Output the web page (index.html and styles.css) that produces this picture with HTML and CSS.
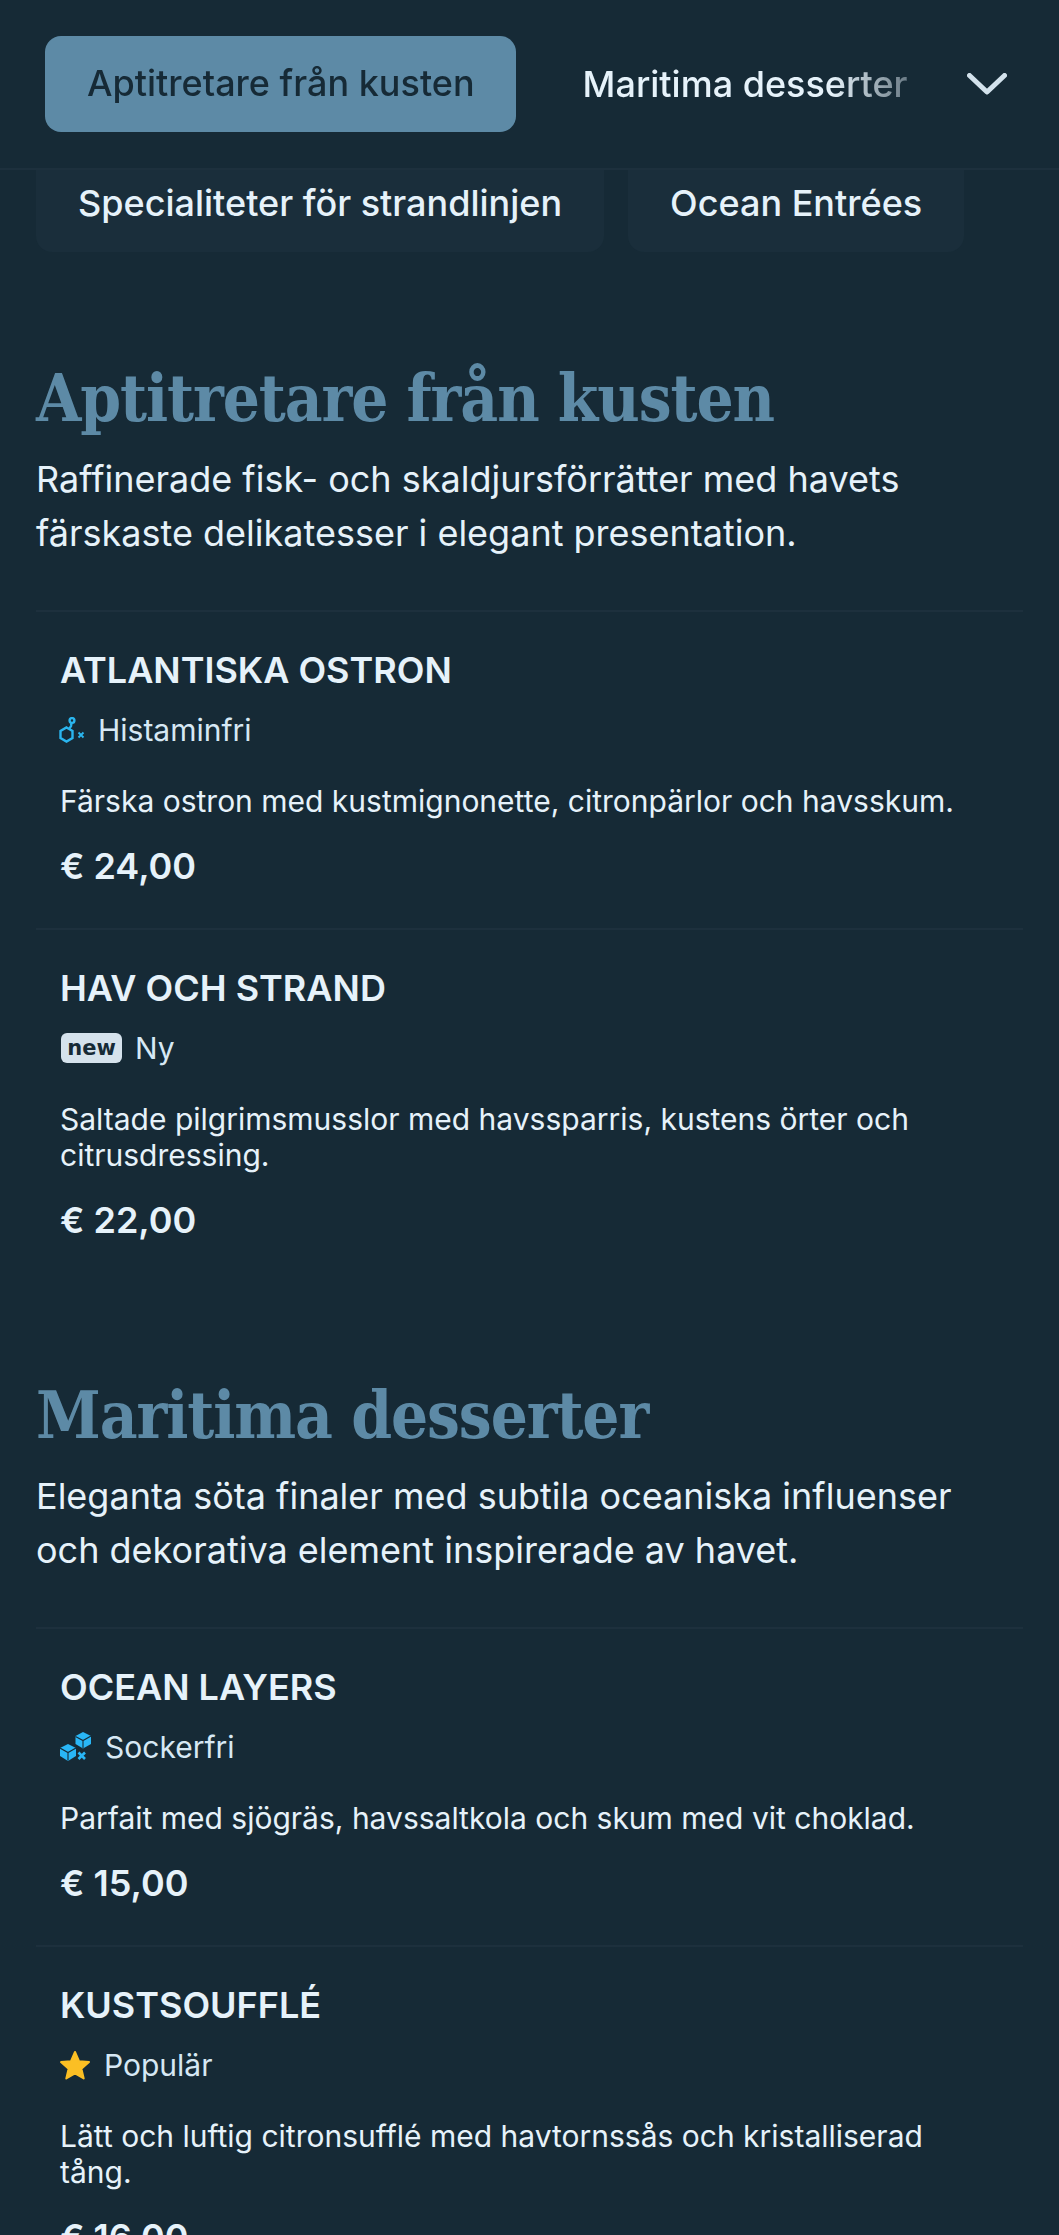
FILE: index.html
```html
<!DOCTYPE html>
<html lang="sv">

<head>
    <meta charset="UTF-8">
    <meta name="viewport" content="width=device-width, initial-scale=1.0">
    <title>Meny</title>
    <link rel="stylesheet" href="styles.css">
</head>

<body>
    <header class="topbar">
        <nav class="tabs-scroll">
            <a class="tab tab-active">Aptitretare från kusten</a>
            <a class="tab">Maritima desserter</a>
        </nav>
        <svg class="chevron" viewBox="0 0 40 22" width="40" height="22">
            <path d="M2.5 2.5 L20 19 L37.5 2.5" fill="none" stroke="#d3e2ec" stroke-width="5" stroke-linecap="round" stroke-linejoin="round" />
        </svg>
    </header>
    <div class="more-tabs">
        <a class="more-tab">Specialiteter för strandlinjen</a>
        <a class="more-tab">Ocean Entrées</a>
    </div>

    <section class="menu-section">
        <h2>Aptitretare från kusten</h2>
        <p class="lead">Raffinerade fisk- och skaldjursförrätter med havets färskaste delikatesser i elegant presentation.</p>
        <article class="dish">
            <h3>ATLANTISKA OSTRON</h3>
            <div class="tag">
                <svg class="tag-icon icon-histamine" viewBox="0 0 27 27" width="27" height="27">
                    <g fill="none" stroke="#2ab5ee" stroke-width="2.4">
                        <circle cx="14" cy="3.5" r="2.4" />
                        <path d="M13.5 6 L13 9 L11.5 11.5" />
                        <path d="M8.5 10.5 L14.5 14 L14.5 21 L8.5 24.5 L2.5 21 L2.5 14 Z" />
                    </g>
                    <path d="M20.5 15.5 L25.5 20.5 M25.5 15.5 L20.5 20.5" stroke="#2ab5ee" stroke-width="1.9" />
                </svg>
                <span>Histaminfri</span>
            </div>
            <p class="desc">Färska ostron med kustmignonette, citronpärlor och havsskum.</p>
            <div class="price">€ 24,00</div>
        </article>
        <article class="dish">
            <h3>HAV OCH STRAND</h3>
            <div class="tag">
                <span class="badge-new">new</span>
                <span>Ny</span>
            </div>
            <p class="desc">Saltade pilgrimsmusslor med havssparris, kustens örter och citrusdressing.</p>
            <div class="price">€ 22,00</div>
        </article>
    </section>

    <section class="menu-section">
        <h2>Maritima desserter</h2>
        <p class="lead">Eleganta söta finaler med subtila oceaniska influenser och dekorativa element inspirerade av havet.</p>
        <article class="dish">
            <h3>OCEAN LAYERS</h3>
            <div class="tag">
                <svg class="tag-icon" viewBox="0 0 32 30" width="32" height="30">
                    <path d="M23 0 L31 4 L31 12 L23 16.5 L15.5 12 L15.5 4 Z" fill="#29b6f6" />
                    <path d="M8 12 L16 16 L16 24 L8 29 L0 24 L0 16 Z" fill="#29b6f6" />
                    <path d="M15.5 4.5 L23 8.5 L31 4 M23 8.5 L23 16 M0 16 L8 20.5 L16 16 M8 20.5 L8 28.5" fill="none" stroke="#162a36" stroke-width="1.1" />
                    <path d="M18.5 20.5 L25 27 M25 20.5 L18.5 27" stroke="#29b6f6" stroke-width="2.6" />
                </svg>
                <span>Sockerfri</span>
            </div>
            <p class="desc">Parfait med sjögräs, havssaltkola och skum med vit choklad.</p>
            <div class="price">€ 15,00</div>
        </article>
        <article class="dish">
            <h3>KUSTSOUFFLÉ</h3>
            <div class="tag">
                <svg class="tag-icon icon-star" viewBox="0 0 32 30" width="32" height="30">
                    <path d="M16 2 L20 11.2 L30 12.1 L22.4 18.8 L24.7 28.5 L16 23.4 L7.3 28.5 L9.6 18.8 L2 12.1 L12 11.2 Z" fill="#fbbf24" stroke="#fbbf24" stroke-width="2" stroke-linejoin="round" />
                </svg>
                <span>Populär</span>
            </div>
            <p class="desc">Lätt och luftig citronsufflé med havtornssås och kristalliserad tång.</p>
            <div class="price">€ 16,00</div>
        </article>
    </section>
</body>

</html>
```

FILE: styles.css
```css
* {
    margin: 0;
    padding: 0;
    box-sizing: border-box;
}

html,
body {
    height: 100%;
    overflow: hidden;
}

body {
    background-color: #162a36;
    color: #e6f2fa;
    font-family: Inter, "Liberation Sans", sans-serif;
}

.topbar {
    display: flex;
    align-items: center;
    height: 170px;
    padding: 0 52px 0 45px;
    border-bottom: 2px solid #1d303d;
}

.tabs-scroll {
    display: flex;
    align-items: center;
    gap: 67px;
    flex: 1;
    min-width: 0;
    overflow: hidden;
    white-space: nowrap;
    -webkit-mask-image: linear-gradient(to right, #000 86%, transparent 100%);
    mask-image: linear-gradient(to right, #000 86%, transparent 100%);
}

.tab {
    font-size: 36px;
    font-weight: 500;
    line-height: 94px;
}

.tab-active {
    height: 96px;
    padding: 0 41px 0 42px;
    background-color: #5d8aa6;
    border-radius: 16px;
    color: #162a36;
}

.chevron {
    flex: none;
    margin-left: 7px;
}

.more-tabs {
    display: flex;
    gap: 24px;
    height: 82px;
    padding-left: 36px;
}

.more-tab {
    padding: 11px 42px 0;
    font-size: 36px;
    font-weight: 500;
    line-height: 44px;
    background-color: #1a2e3b;
    border-radius: 0 0 16px 16px;
}

.menu-section {
    padding: 0 36px;
    margin-bottom: 97px;
}

.menu-section:first-of-type {
    padding-top: 110px;
}

h2 {
    font-family: "DejaVu Serif", serif;
    font-stretch: condensed;
    font-size: 65px;
    font-weight: 700;
    letter-spacing: -1.1px;
    line-height: 72px;
    color: #5d8aa6;
}

.lead {
    margin-top: 18px;
    margin-bottom: 50px;
    font-size: 36px;
    line-height: 54px;
}

.dish {
    padding: 36px 24px 40px;
    border-top: 2px solid #1d303d;
}

h3 {
    font-size: 36px;
    font-weight: 600;
    line-height: 44px;
}

.tag {
    display: flex;
    align-items: center;
    gap: 13px;
    height: 40px;
    margin-top: 18px;
    font-size: 30px;
    color: #d6e8f4;
}

.tag-icon {
    flex: none;
}

.icon-histamine {
    margin-left: -2px;
}

.icon-star {
    margin-left: -1px;
}

.badge-new {
    flex: none;
    width: 61px;
    margin-left: 1px;
    font-family: "DejaVu Sans", sans-serif;
    font-size: 21px;
    font-weight: 700;
    line-height: 30px;
    text-align: center;
    background-color: #d5e2ec;
    border-radius: 6px;
    color: #162a36;
}

.desc {
    margin-top: 33px;
    font-size: 30px;
    line-height: 36px;
}

.price {
    margin-top: 25px;
    font-size: 36px;
    font-weight: 600;
    line-height: 44px;
}
```
